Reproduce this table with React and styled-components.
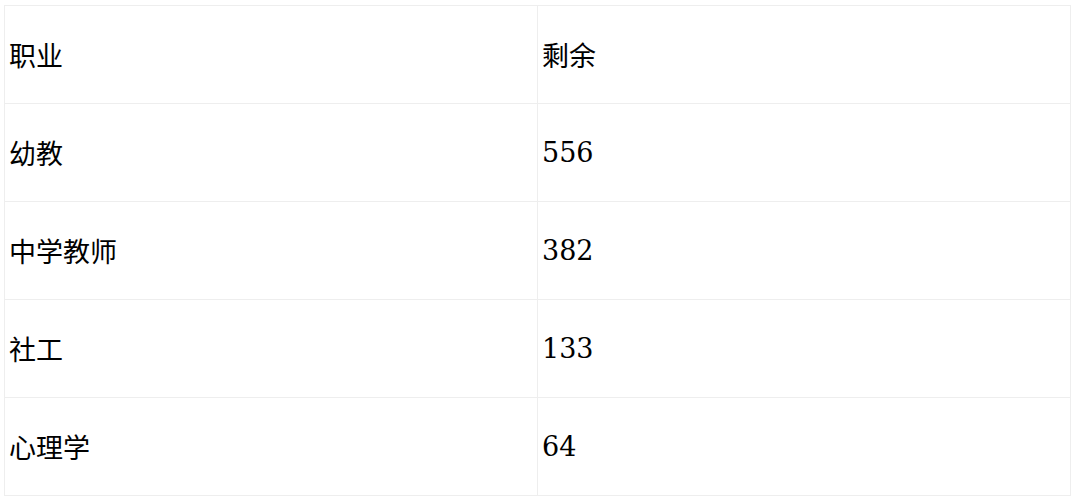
import React from 'react';
import styled, { createGlobalStyle } from 'styled-components';

const Global = createGlobalStyle`
  body {
    margin: 5px 4px 4px;
    background: #fff;
    font-family: 'DejaVu Serif', 'Noto Sans CJK SC', serif;
  }
`;

const Table = styled.div`
  display: grid;
  grid-template-columns: 1fr 1fr;
  width: 1066px;
  border-top: 1px solid #eeeeee;
  border-left: 1px solid #eeeeee;
`;

const Cell = styled.div`
  display: flex;
  align-items: center;
  height: 97px;
  padding: 0 4px;
  border-right: 1px solid #eeeeee;
  border-bottom: 1px solid #eeeeee;
  font-size: 27px;
  color: #000;
`;

const rows = [
  ['职业', '剩余'],
  ['幼教', '556'],
  ['中学教师', '382'],
  ['社工', '133'],
  ['心理学', '64'],
];

export default function App() {
  return (
    <>
      <Global />
      <Table>
        {rows.map((r, i) => (
          <React.Fragment key={i}>
            <Cell>{r[0]}</Cell>
            <Cell>{r[1]}</Cell>
          </React.Fragment>
        ))}
      </Table>
    </>
  );
}
